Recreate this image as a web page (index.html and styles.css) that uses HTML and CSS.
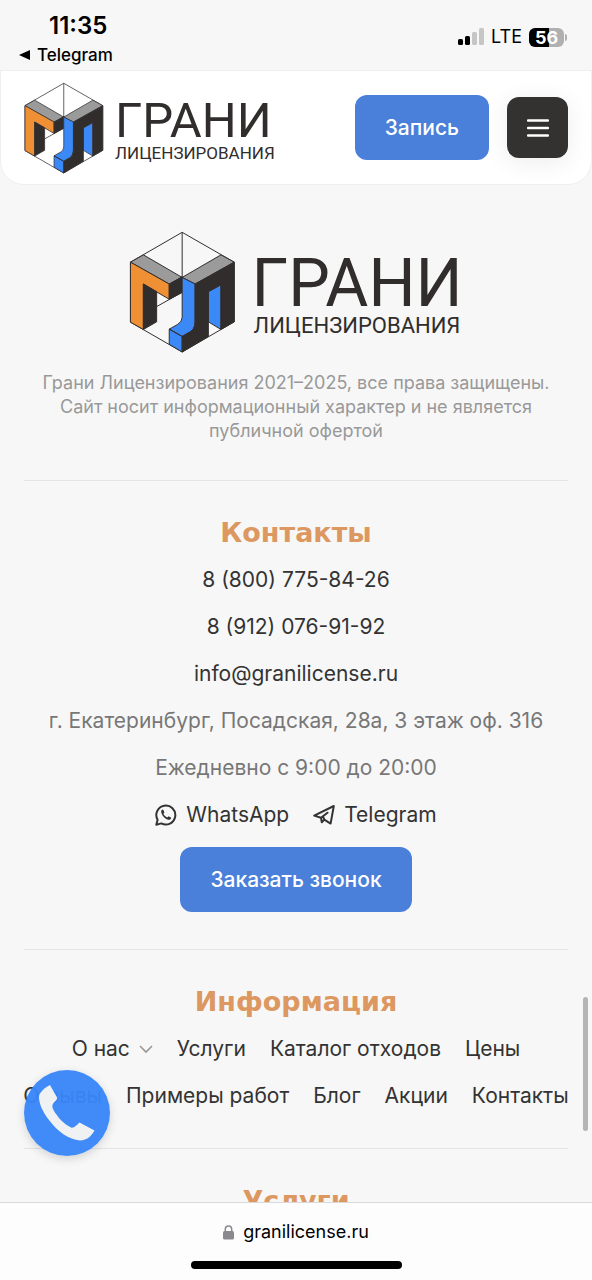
FILE: index.html
```html
<!DOCTYPE html>
<html lang="ru">
<head>
<meta charset="utf-8">
<meta name="viewport" content="width=device-width, initial-scale=1">
<title>Грани Лицензирования</title>
<link rel="stylesheet" href="styles.css">
</head>
<body>
<svg width="0" height="0" class="sprite" aria-hidden="true">
  <symbol id="cube" viewBox="30 30 322 368">
    <g stroke="#312d2c" stroke-width="3" stroke-linejoin="round">
      <path fill="none" d="M190 34 347 124V304L190 395 34 305V124ZM190 34V170M113 258 190 215"/>
      <path fill="#9b9b9b" d="M34 124 73 102 190 170 151 190ZM190 170 307 102 347 124 229 190Z"/>
      <path fill="#f09035" d="M34 124 151 190V236L73 190V327L34 305Z"/>
      <path fill="#312d2c" d="M151 190 190 168V215L151 236ZM73 190 113 213V304L73 327Z"/>
      <path fill="#3b88f7" d="M190 170 229 190V305Q229 326 213 335L190 348 151 326 176 312Q190 304 190 290ZM307 192V327L269 304V213ZM151 326 190 348V395L151 372Z"/>
      <path fill="#312d2c" d="M229 190 347 124V304L307 327V192L269 213V348L190 395V348L213 335Q229 326 229 305Z"/>
    </g>
  </symbol>
</svg>

<div class="status">
  <div class="status-left">
    <span class="time">11:35</span>
    <a class="back" href="#"><svg width="12" height="10" viewBox="0 0 12 10" aria-hidden="true"><path d="M0 5 11 0V10Z"/></svg>Telegram</a>
  </div>
  <div class="status-right">
    <svg width="26" height="18" viewBox="0 0 26 18" aria-hidden="true">
      <rect x="0" y="11" width="5" height="6" rx="1.5"/><rect x="7" y="8" width="5" height="9" rx="1.5"/>
      <g fill="#c6c6c6"><rect x="14" y="4" width="5" height="13" rx="1.5"/><rect x="21" y="0" width="5" height="17" rx="1.5"/></g>
    </svg>
    <span class="network">LTE</span>
    <span class="battery">56</span>
  </div>
</div>

<header class="header">
  <a class="logo" href="#">
    <svg class="logo-cube" aria-hidden="true"><use href="#cube"/></svg>
    <span class="logo-words"><span class="logo-name">ГРАНИ</span><span class="logo-sub">ЛИЦЕНЗИРОВАНИЯ</span></span>
  </a>
  <div class="header-actions">
    <button class="button" type="button">Запись</button>
    <button class="menu" type="button" aria-label="Меню">
      <svg width="22" height="18" viewBox="0 0 22 18" aria-hidden="true"><path d="M1 1.500H21M1 9H21M1 16.500H21" stroke="#fff" stroke-width="2.300" stroke-linecap="round"/></svg>
    </button>
  </div>
</header>

<main class="page">
  <section class="section intro">
    <a class="logo logo-large" href="#">
      <svg class="logo-cube" aria-hidden="true"><use href="#cube"/></svg>
      <span class="logo-words"><span class="logo-name">ГРАНИ</span><span class="logo-sub">ЛИЦЕНЗИРОВАНИЯ</span></span>
    </a>
    <p class="legal">Грани Лицензирования 2021–2025, все права защищены. Сайт носит информационный характер и не является публичной офертой</p>
  </section>

  <section class="section">
    <h2>Контакты</h2>
    <a href="#">8 (800) 775-84-26</a>
    <a href="#">8 (912) 076-91-92</a>
    <a href="#">info@granilicense.ru</a>
    <p class="muted">г. Екатеринбург, Посадская, 28а, 3 этаж оф. 316</p>
    <p class="muted">Ежедневно с 9:00 до 20:00</p>
    <div class="messengers">
      <a href="#"><svg width="22" height="22" viewBox="0 0 22 22" fill="none" stroke="#333" stroke-width="2" aria-hidden="true"><path stroke-linejoin="round" d="M1.300 20.700 2.600 15.800A9.500 9.500 0 1 1 6.300 19.400Z"/><path fill="#333" stroke="none" d="M7.500 5.600C6.200 6.200 5.900 7.500 6.400 9 7.400 12.200 10 14.900 13 15.700 14.600 16.100 16 15.300 16.200 13.700L13.600 12.300 12.400 13.600C10.500 12.800 9.200 11.500 8.400 9.800L9.400 8.600 8.400 5.900Z"/></svg>WhatsApp</a>
      <a href="#"><svg width="22" height="22" viewBox="0 0 22 22" fill="none" stroke="#333" stroke-width="2" stroke-linejoin="round" stroke-linecap="round" aria-hidden="true"><path d="M1.200 11.600 20.800 2 17.600 19.600 11.300 15.600 8.800 18.200 8 13.700ZM8 13.700 14.500 8.700M11.300 15.600 10.500 13.500"/></svg>Telegram</a>
    </div>
    <button class="button" type="button">Заказать звонок</button>
  </section>

  <section class="section">
    <h2>Информация</h2>
    <nav class="links">
      <a href="#">О нас<svg width="14" height="9" viewBox="0 0 14 9" fill="none" stroke="#999" stroke-width="1.700" stroke-linecap="round" aria-hidden="true"><path d="M1.500 1.500 7 7 12.500 1.500"/></svg></a>
      <a href="#">Услуги</a>
      <a href="#">Каталог отходов</a>
      <a href="#">Цены</a>
    </nav>
    <nav class="links">
      <a href="#">Отзывы</a>
      <a href="#">Примеры работ</a>
      <a href="#">Блог</a>
      <a href="#">Акции</a>
      <a href="#">Контакты</a>
    </nav>
  </section>

  <section class="section">
    <h2>Услуги</h2>
  </section>
</main>

<span class="scroll-thumb"></span>
<button class="call" type="button" aria-label="Позвонить">
  <svg width="56" height="57" viewBox="0 0 56 57" aria-hidden="true"><path fill="#f0f1f3" d="M11 0 18 12.500Q18.500 14 17 15.500C13 19 12.500 21 14.500 25 19 33 25 39 32 42.500 34 43.200 36 42 40.500 37.500L55.500 45.500C52 52 47 55.500 41 55.500 30 54.500 19 47 10 35 3 26 0 18 0 12 0 8 5 3 11 0Z"/></svg>
</button>

<footer class="browser-bar">
  <a class="address" href="#"><svg width="11" height="15" viewBox="0 0 11 15" aria-hidden="true"><path fill="none" stroke="#8a8a8e" stroke-width="1.500" d="M2.300 7V4.200a3.200 3.200 0 0 1 6.400 0V7"/><rect x="0" y="6" width="11" height="8.500" rx="1.500" fill="#8a8a8e"/></svg>granilicense.ru</a>
  <span class="home-indicator"></span>
</footer>
</body>
</html>
```
FILE: styles.css
```css
* { box-sizing: border-box; }

body {
  margin: 0;
  height: 100vh;
  display: flex;
  flex-direction: column;
  overflow: hidden;
  background: #f7f7f7;
  color: #333;
  font: 400 21px/30px Inter, "Liberation Sans", sans-serif;
}

a { color: inherit; text-decoration: none; }
p, h2 { margin: 0; }
button { border: 0; padding: 0; font: inherit; cursor: pointer; }
svg { flex: none; }
.sprite { position: absolute; }

.status {
  flex: none;
  height: 70px;
  padding: 12px 28px 0 19px;
  display: flex;
  justify-content: space-between;
  color: #000;
}
.status-left { display: flex; flex-direction: column; }
.time { padding-left: 30px; font-size: 24px; font-weight: 600; line-height: 28px; }
.back { display: flex; align-items: center; gap: 6px; font-size: 17px; font-weight: 500; }
.status-right { display: flex; align-items: center; gap: 7px; height: 50px; }
.network { font-size: 18px; }
.battery {
  position: relative;
  width: 35px;
  border-radius: 6px;
  background: linear-gradient(90deg, #000 56%, #b0b0b0 56%);
  color: #fff;
  font-size: 18px;
  font-weight: 700;
  line-height: 19px;
  text-align: center;
}
.battery::after {
  content: "";
  position: absolute;
  left: 100%;
  top: 6px;
  margin-left: 1px;
  width: 2px;
  height: 7px;
  border-radius: 0 2px 2px 0;
  background: #b0b0b0;
}

.header {
  flex: none;
  height: 115px;
  padding: 0 23px;
  display: flex;
  align-items: center;
  justify-content: space-between;
  border: 1px solid #efefef;
  border-radius: 0 0 24px 24px;
  background: #fff;
}
.header-actions { display: flex; align-items: center; gap: 18px; }

.logo { display: flex; gap: 11px; color: #312d2c; font-family: Roboto, sans-serif; }
.logo-cube { width: 80px; height: 92px; }
.logo-words { display: flex; flex-direction: column; padding-top: 16px; }
.logo-name { font-size: 49px; line-height: 46px; }
.logo-sub { font-size: 17px; line-height: 18px; }
.logo-large { gap: 15px; }
.logo-large .logo-cube { width: 107px; height: 122px; }
.logo-large .logo-words { padding-top: 22px; }
.logo-large .logo-name { font-size: 66px; line-height: 61px; }
.logo-large .logo-sub { font-size: 22px; line-height: 24px; }

.button {
  height: 65px;
  padding: 0 30px;
  border-radius: 12px;
  background: #4a7fda;
  color: #fff;
  font-weight: 500;
}
.menu {
  width: 61px;
  height: 61px;
  display: grid;
  place-items: center;
  border-radius: 12px;
  background: #333230;
  box-shadow: 0 4px 24px rgba(0, 0, 0, 0.08);
}

.page { flex: 1; min-height: 0; overflow: hidden; padding: 0 24px; }
.section {
  display: flex;
  flex-direction: column;
  align-items: center;
  gap: 17px;
  padding: 37px 0;
  border-bottom: 1px solid #e4e4e4;
  text-align: center;
}
.intro { padding-top: 46px; gap: 18px; }
.legal { padding: 0 12px; color: #999; font-size: 18px; line-height: 24px; }
h2 { color: #dc9860; font: 700 27px/30px "DejaVu Sans", sans-serif; }
.muted { color: #777; }
.messengers, .links { display: flex; justify-content: center; gap: 24px; white-space: nowrap; }
.messengers a, .links a { display: flex; align-items: center; gap: 9px; }

.call {
  position: fixed;
  left: 24px;
  bottom: 124px;
  width: 86px;
  height: 86px;
  display: grid;
  place-items: center;
  border-radius: 50%;
  background: rgba(56, 134, 248, 0.96);
  box-shadow: 0 3px 10px rgba(0, 0, 0, 0.15);
}
.scroll-thumb {
  position: fixed;
  right: 4px;
  bottom: 149px;
  width: 5px;
  height: 134px;
  border-radius: 3px;
  background: #b5b5b5;
}

.browser-bar {
  flex: none;
  height: 78px;
  padding: 14px 0 11px;
  display: flex;
  flex-direction: column;
  align-items: center;
  justify-content: space-between;
  border-top: 1px solid #d9d9d9;
  background: #fdfdfd;
  color: #000;
}
.address { display: flex; align-items: center; gap: 9px; font-size: 18px; }
.home-indicator { width: 211px; height: 8px; border-radius: 4px; background: #000; }
```
